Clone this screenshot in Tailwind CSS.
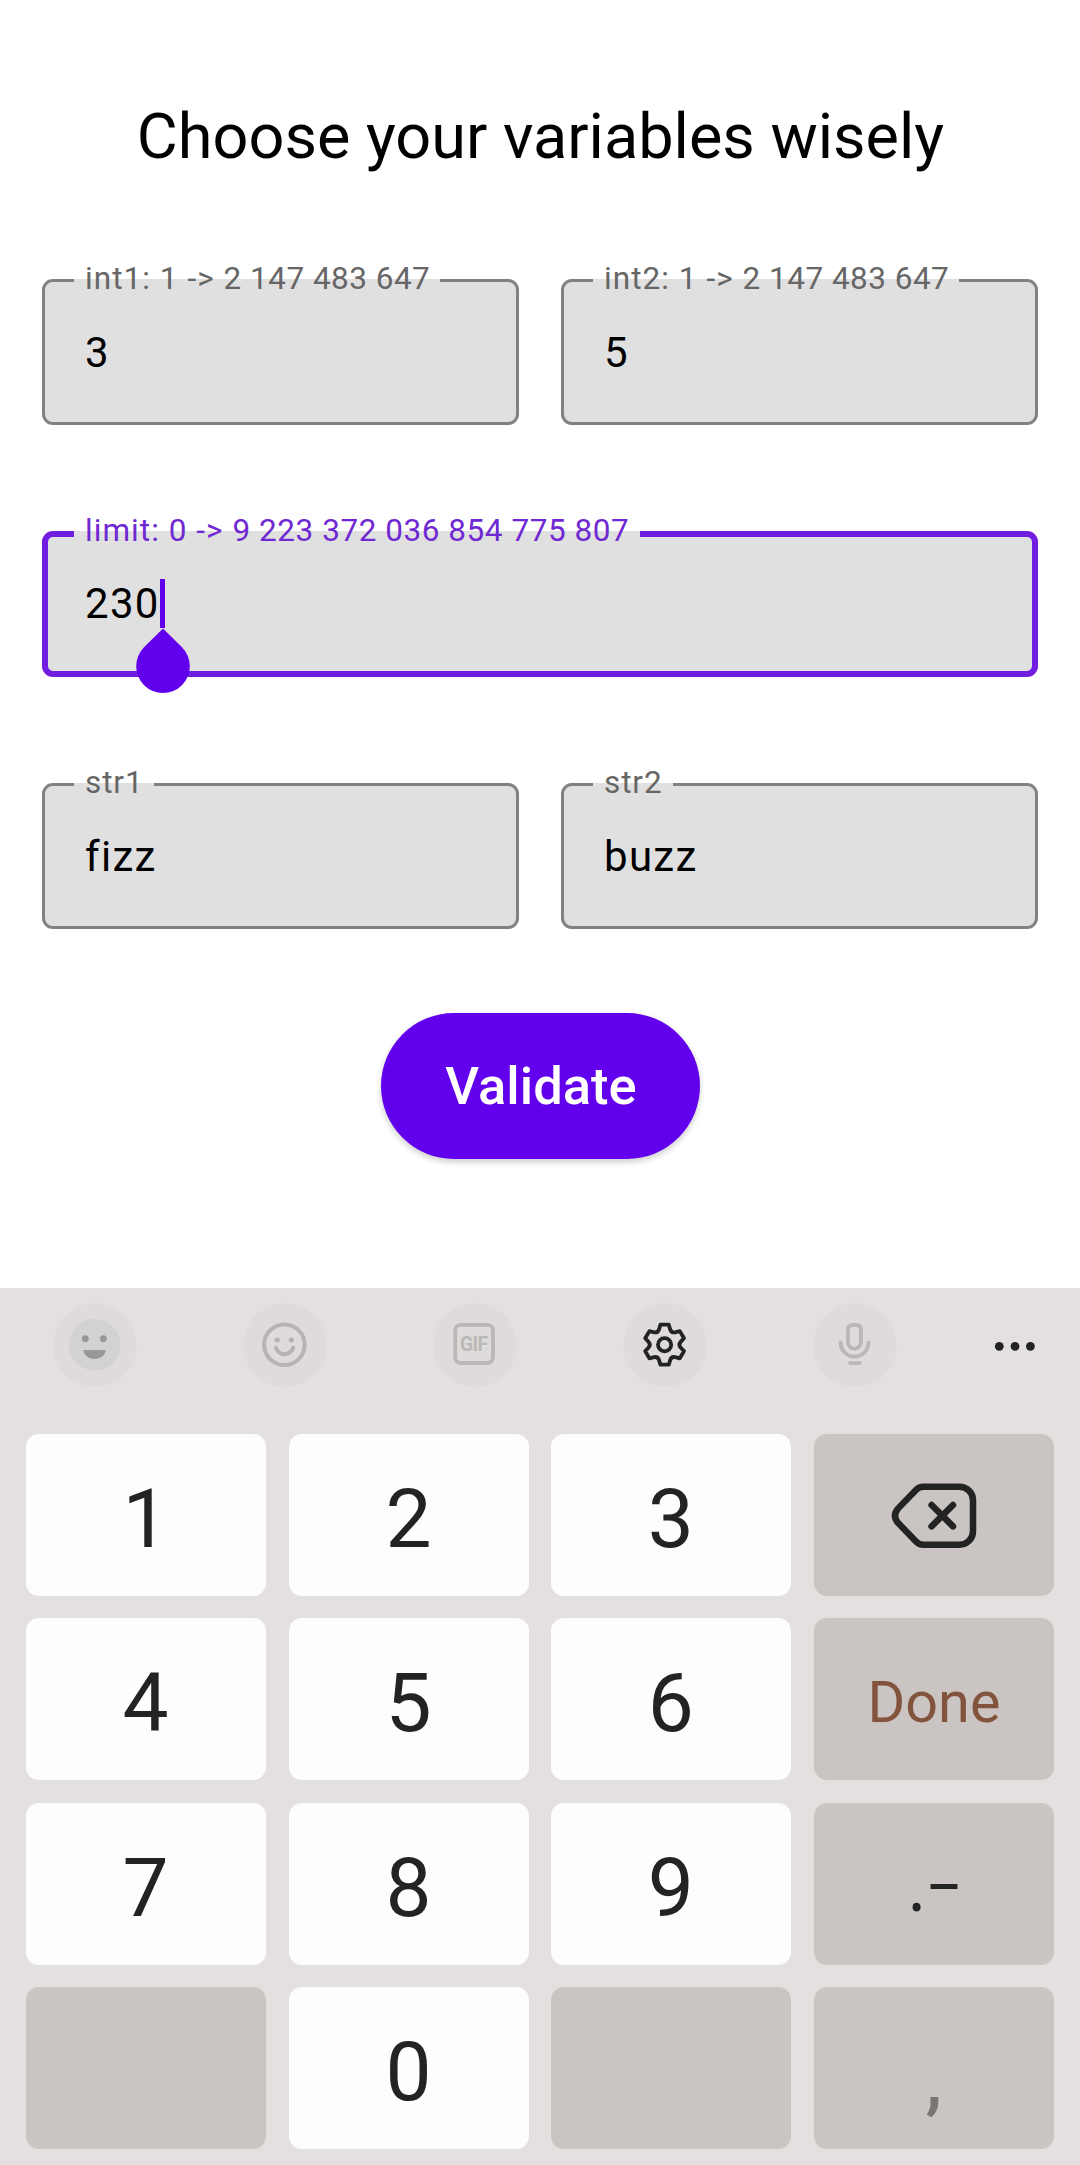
<!DOCTYPE html>
<html lang="en">
<head>
<meta charset="utf-8">
<title>Choose your variables wisely</title>
<script src="https://cdn.jsdelivr.net/npm/@tailwindcss/browser@4"></script>
</head>
<body class="flex h-[2165px] w-[1080px] flex-col overflow-hidden bg-white font-['Roboto',sans-serif] text-black">
<main class="flex h-[1288px] flex-col items-center px-[42px] pt-[100px]">
  <h1 class="h-[161px] pl-px text-[63px] leading-[74px] whitespace-nowrap">Choose your variables wisely</h1>

  <div class="grid w-full grid-cols-2 gap-x-[42px]">
    <fieldset class="h-[164px] rounded-[11px] border-3 border-[#828282] bg-[#e0e0e0] pt-[28px] pl-[40px]">
      <legend class="-ml-[11px] pr-[10px] pl-[11px] pb-[3px] text-[31.5px] leading-[36px] tracking-[1.05px] whitespace-pre text-[#666]">int1: 1 -&gt; <span class="tracking-[0.48px]">2 147 483 647</span></legend>
      <div class="text-[42px] leading-[49px] tracking-[1.3px]">3</div>
    </fieldset>
    <fieldset class="h-[164px] rounded-[11px] border-3 border-[#828282] bg-[#e0e0e0] pt-[28px] pl-[40px]">
      <legend class="-ml-[11px] pr-[10px] pl-[11px] pb-[3px] text-[31.5px] leading-[36px] tracking-[1.05px] whitespace-pre text-[#666]">int2: 1 -&gt; <span class="tracking-[0.48px]">2 147 483 647</span></legend>
      <div class="text-[42px] leading-[49px] tracking-[1.3px]">5</div>
    </fieldset>
  </div>

  <fieldset class="mt-[88px] h-[164px] w-full rounded-[11px] border-6 border-[#701ee0] bg-[#e0e0e0] pt-[25px] pl-[37px]">
    <legend class="-ml-[11px] pr-[11px] pl-[11px] pb-[5px] text-[31.5px] leading-[36px] tracking-[1.05px] whitespace-pre text-[#7029d2]">limit: 0 -&gt; <span class="tracking-[0.54px]">9 223 372 036 854 775 807</span></legend>
    <div class="flex text-[42px] leading-[49px] tracking-[1.3px]">
      <span class="w-[75px]">230</span>
      <!-- text cursor with its drag handle -->
      <span class="relative h-[49px] w-[5px] bg-[#6200ee]">
        <svg class="absolute top-[49px] -left-[25px] h-[66px] w-[56px]" viewBox="0 0 56 66"><path fill="#6200ee" d="M28 0.5 L47 19.3 A26.8 26.8 0 1 1 9 19.3 Z"/></svg>
      </span>
    </div>
  </fieldset>

  <div class="mt-[88px] grid w-full grid-cols-2 gap-x-[42px]">
    <fieldset class="h-[164px] rounded-[11px] border-3 border-[#828282] bg-[#e0e0e0] pt-[28px] pl-[40px]">
      <legend class="-ml-[11px] pr-[10px] pl-[11px] pb-[3px] text-[31.5px] leading-[36px] tracking-[0.9px] text-[#666]">str1</legend>
      <div class="text-[42px] leading-[49px] tracking-[1.3px]">fizz</div>
    </fieldset>
    <fieldset class="h-[164px] rounded-[11px] border-3 border-[#828282] bg-[#e0e0e0] pt-[28px] pl-[40px]">
      <legend class="-ml-[11px] pr-[10px] pl-[11px] pb-[3px] text-[31.5px] leading-[36px] tracking-[0.9px] text-[#666]">str2</legend>
      <div class="text-[42px] leading-[49px] tracking-[1.3px]">buzz</div>
    </fieldset>
  </div>

  <button class="mt-[84px] h-[146px] w-[319px] rounded-full bg-[#6200ee] pl-[2px] text-[52.5px] leading-[62px] font-medium text-white shadow-[0_3px_6px_rgba(0,0,0,0.2)]">Validate</button>
</main>

<section class="flex h-[877px] flex-col bg-[#e4e0df] text-[#232323]">
  <div class="flex h-[146px] gap-[106px] pt-[15px] pl-[53px]">
    <svg class="size-[84px]" viewBox="0 0 84 84"><circle cx="42" cy="42" r="42" fill="#dedbda"/><circle cx="41.7" cy="41.7" r="25.8" fill="#d3d2d3"/><g fill="#999897"><circle cx="32.3" cy="35.7" r="3.4"/><circle cx="50.4" cy="35.7" r="3.4"/><path d="M30.3 47H52.7C52.2 52.5 47.5 56 41.5 56S30.8 52.5 30.3 47Z"/></g></svg>
    <svg class="size-[84px]" viewBox="0 0 84 84"><circle cx="42" cy="42" r="42" fill="#dedbda"/><g fill="none" stroke="#b5b4b3" stroke-width="4" stroke-linecap="round"><circle cx="41.4" cy="41.7" r="20.3"/><path d="M32.8 44.8C34.6 49 37.8 51.2 41.4 51.2S48.6 49 50.3 44.8"/></g><circle cx="34.3" cy="37" r="2.6" fill="#b5b4b3"/><circle cx="48.4" cy="37" r="2.6" fill="#b5b4b3"/></svg>
    <svg class="size-[84px]" viewBox="0 0 84 84"><circle cx="42" cy="42" r="42" fill="#dedbda"/><rect x="22.2" y="21.8" width="37.8" height="38.2" rx="5.5" fill="none" stroke="#b9b8b7" stroke-width="3.8"/><text x="41" y="48" text-anchor="middle" textLength="28" font-size="19.3" class="font-bold" fill="#b9b8b7">GIF</text></svg>
    <svg class="size-[84px]" viewBox="0 0 84 84"><circle cx="42" cy="42" r="42" fill="#dedbda"/><g transform="translate(41.6 41.7)" fill="none" stroke="#232323" stroke-width="3.8" stroke-linejoin="round"><circle r="6.6"/><path d="M-5.6-15.2L-4.2-20L4.2-20L5.6-15.2Q6.8-11.8 10.4-12.4L15.2-13.6L19.4-6.4L16-2.8Q13.6 0 16 2.8L19.4 6.4L15.2 13.6L10.4 12.4Q6.8 11.8 5.6 15.2L4.2 20L-4.2 20L-5.6 15.2Q-6.8 11.8-10.4 12.4L-15.2 13.6L-19.4 6.4L-16 2.8Q-13.6 0-16-2.8L-19.4-6.4L-15.2-13.6L-10.4-12.4Q-6.8-11.8-5.6-15.2Z"/></g></svg>
    <svg class="size-[84px]" viewBox="0 0 84 84"><circle cx="42" cy="42" r="42" fill="#dedbda"/><g fill="none" stroke="#b9b8b7" stroke-width="3.8" stroke-linecap="round"><path d="M39.8 22H43.2Q48 22 48 26.8V39A6.5 6.8 0 0 1 35 39V26.8Q35 22 39.8 22Z"/><path d="M27.6 39.5A13.9 14.2 0 0 0 55.4 39.5M37 60.1H46.8"/></g></svg>
    <svg class="-ml-[25px] h-[84px] w-[60px]" viewBox="0 0 60 84" fill="#232323"><circle cx="21.3" cy="43.3" r="4.4"/><circle cx="37" cy="43.3" r="4.4"/><circle cx="52.4" cy="43.3" r="4.4"/></svg>
  </div>

  <div class="grid grid-cols-4 gap-x-[22.67px] gap-y-[22.33px] px-[26px] text-center text-[82px] leading-[171px] *:h-[162px] *:rounded-[13px]">
    <div class="bg-[#fdfdfd] pr-px">1</div>
    <div class="bg-[#fdfdfd]">2</div>
    <div class="bg-[#fdfdfd] pr-px">3</div>
    <div class="flex items-start justify-center bg-[#cac5c2] pt-[46px]">
      <svg class="h-[72px] w-[88px]" viewBox="0 0 88 72" fill="none" stroke="#232323" stroke-width="6.5" stroke-linecap="round"><path d="M33.5 6.7H69.5A13.5 13.5 0 0 1 83 20.2V51.2A13.5 13.5 0 0 1 69.5 64.7H33.5Q29 64.7 26 61.5L8 42.8Q2 35.7 8 28.6L26 9.9Q29 6.7 33.5 6.7Z"/><path d="M41.6 25L63 46.4M63 25L41.6 46.4"/></svg>
    </div>
    <div class="bg-[#fdfdfd] pr-px">4</div>
    <div class="bg-[#fdfdfd]">5</div>
    <div class="bg-[#fdfdfd] pr-px">6</div>
    <div class="bg-[#cac5c2] text-[57.5px] leading-[170px] text-[#83543d]">Done</div>
    <div class="bg-[#fdfdfd] pr-px">7</div>
    <div class="bg-[#fdfdfd]">8</div>
    <div class="bg-[#fdfdfd] pr-px">9</div>
    <div class="flex justify-center gap-[3px] bg-[#cac5c2] font-['Noto_Sans',sans-serif]"><span class="text-[64px] leading-[168px]">.</span><span class="text-[64px] leading-[154px]">–</span></div>
    <div class="bg-[#cac5c2]"></div>
    <div class="bg-[#fdfdfd]">0</div>
    <div class="bg-[#cac5c2]"></div>
    <div class="bg-[#cac5c2] text-[75px] leading-[184px] font-medium text-[#7a7674]">,</div>
  </div>
</section>
</body>
</html>
